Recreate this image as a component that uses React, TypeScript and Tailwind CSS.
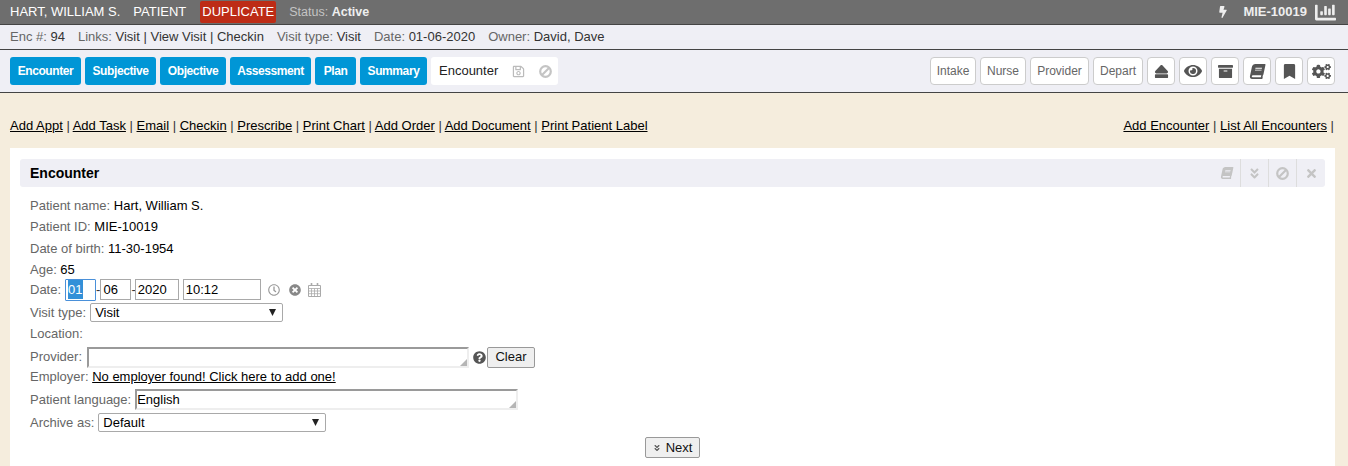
import { FaArchive, FaBolt, FaBook, FaBookmark, FaChartBar, FaCogs, FaEject, FaEye, FaQuestionCircle, FaRegClock, FaRegSave, FaTimes, FaTimesCircle, FaAngleDoubleDown } from 'react-icons/fa';

const tabs = [
  { label: 'Encounter', width: 'w-[71px]' },
  { label: 'Subjective', width: 'w-[71px]' },
  { label: 'Objective', width: 'w-[66px]' },
  { label: 'Assessment', width: 'w-[81px]' },
  { label: 'Plan', width: 'w-[41px]' },
  { label: 'Summary', width: 'w-[67px]' },
];
const roleButtons = [
  { label: 'Intake', width: 'w-[46px]' },
  { label: 'Nurse', width: 'w-[46px]' },
  { label: 'Provider', width: 'w-[59px]' },
  { label: 'Depart', width: 'w-[50px]' },
];
const toolIcons = [FaEject, FaEye, FaArchive, FaBook, FaBookmark, FaCogs];
const leftLinks = ['Add Appt', 'Add Task', 'Email', 'Checkin', 'Prescribe', 'Print Chart', 'Add Order', 'Add Document', 'Print Patient Label'];

// heavier than the FA5 ban glyph, closer to the old font icon
function BanIcon({ className }: { className?: string }) {
  return (
    <svg className={className} width="13" height="13" viewBox="0 0 13 13" fill="none" stroke="currentColor" strokeWidth="2.2">
      <circle cx="6.5" cy="6.5" r="5.3" />
      <path d="M3 10L10 3" />
    </svg>
  );
}

function CalendarIcon({ className }: { className?: string }) {
  return (
    <svg className={className} width="13" height="14" viewBox="0 0 13 14" fill="none" stroke="currentColor">
      <path d="M.5 2.5h12v11H.5z" />
      <path d="M.5 5.5h12M.5 8h12M.5 10.7h12M3.5 5.5v8M6.5 5.5v8M9.5 5.5v8" strokeWidth=".8" />
      <path d="M3.5 0v3M9.5 0v3" strokeWidth="1.6" />
    </svg>
  );
}

function Label({ children }: { children: React.ReactNode }) {
  return <span className="text-[#666]">{children}</span>;
}

function Resizable({ width, value }: { width: string; value?: string }) {
  return (
    <div className={`relative h-[21px] border-2 border-b-[#eee] border-l-[#9a9a9a] border-r-[#eee] border-t-[#9a9a9a] leading-[17px] ${width}`}>
      {value}
      <svg className="absolute bottom-0 right-0" width="7" height="7" viewBox="0 0 7 7">
        <path d="M7 0V7H0Z" fill="#b5b5b5" />
      </svg>
    </div>
  );
}

function Select({ value, width }: { value: string; width: string }) {
  return (
    <div className={`flex h-[19px] items-center justify-between rounded-[2px] border border-[#a9a9a9] bg-white pl-1 pr-[6px] leading-none ${width}`}>
      {value}
      <svg width="7" height="7" viewBox="0 0 7 7">
        <path d="M0 0H7L3.5 7Z" fill="#222" />
      </svg>
    </div>
  );
}

function DateBox({ children, width }: { children: React.ReactNode; width: string }) {
  return <div className={`flex h-[21px] items-center border border-[#a9a9a9] px-[2px] ${width}`}>{children}</div>;
}

export default function App() {
  return (
    <div className="h-[466px] overflow-hidden bg-[#f5eddd] font-['Liberation_Sans',Arial,sans-serif] text-[13px] text-black">
      <div className="flex h-[25px] items-center justify-between border-b border-[#444] bg-[#6e6e6e] pl-2.5 pr-3 text-white">
        <div className="flex items-center">
          <span>HART, WILLIAM S.</span>
          <span className="ml-[13px]">PATIENT</span>
          <span className="ml-[14px] rounded-[2px] bg-[#bd2c16] px-[2px] py-px">DUPLICATE</span>
          <span className="ml-[13px] text-[12.5px] text-[#c4c4c4]">Status: <span className="font-bold text-[#eee]">Active</span></span>
        </div>
        <div className="flex items-center font-bold text-[#eee]">
          <FaBolt size={12} />
          <span className="ml-[14px]">MIE-10019</span>
          <FaChartBar size={21} className="ml-2" />
        </div>
      </div>

      <div className="flex h-[25px] items-center gap-[13px] border-b border-[#444] bg-[#efeff5] px-2.5 text-[#333]">
        <span><span className="text-[#666]">Enc #:</span> 94</span>
        <span><span className="text-[#666]">Links:</span> Visit | View Visit | Checkin</span>
        <span><span className="text-[#666]">Visit type:</span> Visit</span>
        <span><span className="text-[#666]">Date:</span> 01-06-2020</span>
        <span><span className="text-[#666]">Owner:</span> David, Dave</span>
      </div>

      <div className="flex h-[43px] items-center justify-between border-b border-[#444] bg-[#efeff5] pl-2.5 pr-[13px]">
        <div className="flex items-center gap-1">
          {tabs.map((tab) => (
            <div key={tab.label} className={`flex h-7 items-center justify-center rounded-[3px] bg-[#0096d6] text-xs font-bold tracking-[-0.4px] text-white ${tab.width}`}>{tab.label}</div>
          ))}
          <div className="flex h-7 w-[127px] items-center rounded-[3px] bg-white pl-2 text-[#222]">
            Encounter
            <FaRegSave size={13} className="ml-[14px] text-[#bbb]" />
            <BanIcon className="ml-[14px] text-[#c4c4c4]" />
          </div>
        </div>
        <div className="flex items-center gap-1">
          {roleButtons.map((button) => (
            <div key={button.label} className={`flex h-7 items-center justify-center rounded-[4px] border border-[#ccc] bg-white text-xs text-[#666] ${button.width}`}>{button.label}</div>
          ))}
          {toolIcons.map((Icon, i) => (
            <div key={i} className="flex h-7 w-7 items-center justify-center rounded-[4px] border border-[#ccc] bg-white text-[#555]">
              <Icon size={i === 5 ? 19 : i === 1 ? 18 : 15} className={i === 3 ? '-skew-x-12' : ''} />
            </div>
          ))}
        </div>
      </div>

      <div className="flex justify-between pl-2.5 pr-[14px] pt-[25px] leading-[15px] text-[#333]">
        <div>
          {leftLinks.map((link, i) => (
            <span key={link}>
              {i > 0 ? ' | ' : ''}
              <a className="text-black underline">{link}</a>
            </span>
          ))}
        </div>
        <div>
          <a className="text-black underline">Add Encounter</a> | <a className="text-black underline">List All Encounters</a> |
        </div>
      </div>

      <div className="ml-2.5 mr-[13px] mt-[15px] h-[320px] bg-white px-2.5 pt-[11px]">
        <div className="flex h-7 items-center justify-between rounded-[3px] bg-[#efeff5] pl-2.5">
          <span className="text-sm font-bold">Encounter</span>
          <div className="flex h-full items-center text-[#c4c4c4]">
            <div className="flex h-full w-[28px] items-center justify-center border-r border-[#ddd]"><FaBook size={12} className="-skew-x-12" /></div>
            <div className="flex h-full w-[28px] items-center justify-center border-r border-[#ddd]"><FaAngleDoubleDown size={13} /></div>
            <div className="flex h-full w-[28px] items-center justify-center border-r border-[#ddd]"><BanIcon /></div>
            <div className="flex h-full w-[28px] items-center justify-center"><FaTimes size={13} /></div>
          </div>
        </div>

        <div className="pl-2.5">
          <div className="mt-[11px] h-[15px] leading-[15px]"><Label>Patient name:</Label> Hart, William S.</div>
          <div className="mt-1.5 h-[15px] leading-[15px]"><Label>Patient ID:</Label> MIE-10019</div>
          <div className="mt-[7px] h-[15px] leading-[15px]"><Label>Date of birth:</Label> 11-30-1954</div>
          <div className="mt-1.5 h-[15px] leading-[15px]"><Label>Age:</Label> 65</div>
          <div className="mt-px flex h-[23px] items-center">
            <Label>Date:</Label>
            <div className="ml-1 flex h-[22px] w-[31px] items-center rounded-[1px] border border-[#4a90d9] px-[2px]"><span className="bg-[#3390d8] text-white">01</span></div>
            <span className="text-[#333]">-</span>
            <DateBox width="w-[31px]">06</DateBox>
            <span className="-mr-px text-[#333]">-</span>
            <DateBox width="w-[44px]">2020</DateBox>
            <div className="ml-1"><DateBox width="w-[78px]">10:12</DateBox></div>
            <FaRegClock size={12} className="ml-[7px] text-[#999]" />
            <FaTimesCircle size={12} className="ml-[9px] text-[#888]" />
            <CalendarIcon className="ml-[7px] text-[#aaa]" />
          </div>
          <div className="mt-px flex h-[21px] items-center gap-1"><Label>Visit type:</Label><Select value="Visit" width="w-[193px]" /></div>
          <div className="mt-[3px] h-[15px] leading-[15px]"><Label>Location:</Label></div>
          <div className="mt-1 flex h-[24px] items-center">
            <Label>Provider:</Label>
            <div className="ml-[5px]"><Resizable width="w-[382px]" /></div>
            <FaQuestionCircle size={13} className="ml-1 text-[#555]" />
            <div className="ml-px flex h-[21px] w-[48px] items-center justify-center rounded-[2px] border border-[#999] bg-[#efefef] text-[#111]">Clear</div>
          </div>
          <div className="h-[16px] leading-[15px]"><Label>Employer:</Label> <a className="underline">No employer found! Click here to add one!</a></div>
          <div className="mt-[3px] flex h-[23px] items-center gap-1"><Label>Patient language:</Label><Resizable width="w-[383px]" value="English" /></div>
          <div className="mt-[2px] flex h-[19px] items-center gap-1"><Label>Archive as:</Label><Select value="Default" width="w-[228px]" /></div>
        </div>

        <div className="mt-[5px] flex justify-center">
          <div className="flex h-[21px] w-[55px] items-center justify-center gap-[5px] rounded-[2px] border border-[#999] bg-[#efefef] text-[#111]">
            <FaAngleDoubleDown size={8} className="text-[#555]" />Next
          </div>
        </div>
      </div>
    </div>
  );
}
